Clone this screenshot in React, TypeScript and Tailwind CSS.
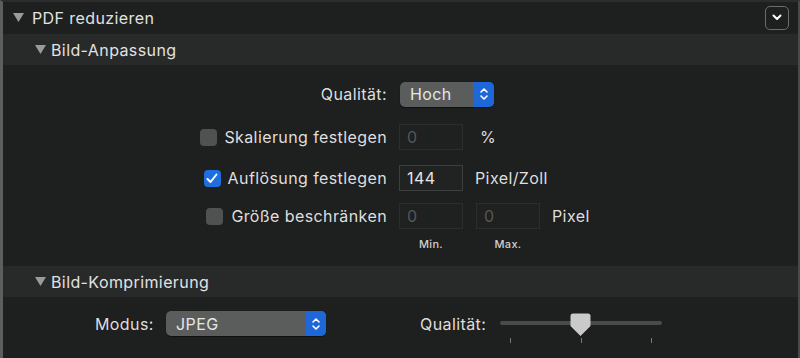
import React from "react";

const font = { fontFamily: "Inter, 'Noto Sans', sans-serif" };

function Tri({ className }: { className?: string }) {
  return (
    <svg width="11" height="9" viewBox="0 0 11 9" className={className}>
      <polygon points="0,0 11,0 5.5,9" fill="#9a9a9a" />
    </svg>
  );
}

function Stepper() {
  return (
    <svg width="10" height="16" viewBox="0 0 10 16">
      <path d="M2 6 L5 3 L8 6" stroke="white" strokeWidth="1.6" fill="none" strokeLinecap="round" strokeLinejoin="round" />
      <path d="M2 10 L5 13 L8 10" stroke="white" strokeWidth="1.6" fill="none" strokeLinecap="round" strokeLinejoin="round" />
    </svg>
  );
}

function Popup({ label, width }: { label: string; width: string }) {
  return (
    <div className={`flex h-[25px] ${width} rounded-[5px] bg-[#5b5c5c] overflow-hidden shadow-[0_0.5px_1px_rgba(0,0,0,0.5)]`}>
      <div className="flex-1 flex items-center pl-[10px] text-[16px] tracking-[0.4px] text-[#e6e6e6]">{label}</div>
      <div className="w-[21px] bg-[#1d67d8] flex items-center justify-center">
        <Stepper />
      </div>
    </div>
  );
}

function Check({ checked }: { checked?: boolean }) {
  if (checked)
    return (
      <div className="w-[17px] h-[17px] rounded-[4px] bg-[#1f6ee0] flex items-center justify-center">
        <svg width="12" height="11" viewBox="0 0 12 11">
          <path d="M1.5 6 L4.5 9 L10.5 1.5" stroke="white" strokeWidth="2" fill="none" strokeLinecap="round" strokeLinejoin="round" />
        </svg>
      </div>
    );
  return <div className="w-[17px] h-[17px] rounded-[4px] bg-[#505151]" />;
}

function Field({ value, active }: { value: string; active?: boolean }) {
  return (
    <div
      className={`w-[64px] h-[26px] flex items-center pl-[7px] text-[16px] tracking-[0.4px] border ${
        active ? "border-[#3d3e3e] bg-[#212222] text-[#e6e6e6]" : "border-[#2c2d2d] bg-[#1f2020] text-[#565757]"
      }`}
    >
      {value}
    </div>
  );
}

export default function App() {
  return (
    <div
      className="w-[800px] h-[358px] bg-[#1e1f1f] border-l-[3px] border-l-[#5d5d5d] border-r-[2px] border-r-[#4a4a4a] border-t-[2px] border-t-[#2c2c2c] flex flex-col text-[#dedede] overflow-hidden box-border text-[16px] tracking-[0.4px]"
      style={font}
    >
      {/* header */}
      <div className="h-[31px] flex items-center pl-[10px] pr-[9px] shrink-0">
        <Tri className="mr-[8px]" />
        <span className="text-[#e2e2e2]">PDF reduzieren</span>
        <div className="ml-auto w-[24px] h-[24px] rounded-[5px] border border-[#6c6c6c] flex items-center justify-center">
          <svg width="10" height="7" viewBox="0 0 10 7">
            <path d="M1.5 1.5 L5 5 L8.5 1.5" stroke="white" strokeWidth="2" fill="none" strokeLinecap="round" strokeLinejoin="round" />
          </svg>
        </div>
      </div>
      {/* subheader */}
      <div className="h-[31px] mt-[1px] bg-[#282929] flex items-center pl-[32px] shrink-0">
        <Tri className="mr-[5px]" />
        <span className="text-[#e2e2e2]">Bild-Anpassung</span>
      </div>
      {/* content */}
      <div className="flex flex-col shrink-0 h-[201px]">
        <div className="flex items-center mt-[16px] h-[26px]">
          <div className="w-[384px] flex justify-end">Qualität:</div>
          <div className="ml-[13px]">
            <Popup label="Hoch" width="w-[94px]" />
          </div>
        </div>
        <div className="flex items-center mt-[17px] h-[26px]">
          <div className="w-[384px] flex justify-end items-center gap-[7px]">
            <Check />
            <span>Skalierung festlegen</span>
          </div>
          <div className="ml-[12px]">
            <Field value="0" />
          </div>
          <span className="ml-[17px]">%</span>
        </div>
        <div className="flex items-center mt-[15px] h-[26px]">
          <div className="w-[384px] flex justify-end items-center gap-[7px]">
            <Check checked />
            <span>Auflösung festlegen</span>
          </div>
          <div className="ml-[12px]">
            <Field value="144" active />
          </div>
          <span className="ml-[12px]">Pixel/Zoll</span>
        </div>
        <div className="flex items-center mt-[12px] h-[26px]">
          <div className="w-[384px] flex justify-end items-center gap-[8px]">
            <Check />
            <span>Größe beschränken</span>
          </div>
          <div className="ml-[12px] flex gap-[13px]">
            <Field value="0" />
            <Field value="0" />
          </div>
          <span className="ml-[12px]">Pixel</span>
        </div>
        <div className="flex mt-[7px] text-[11px] font-medium tracking-[0.3px] text-[#d0d0d0]">
          <div className="w-[396px]" />
          <div className="w-[64px] text-center">Min.</div>
          <div className="w-[13px]" />
          <div className="w-[64px] text-center">Max.</div>
        </div>
      </div>
      {/* subheader 2 */}
      <div className="h-[31px] bg-[#282929] flex items-center pl-[32px] shrink-0">
        <Tri className="mr-[5px]" />
        <span className="text-[#e2e2e2]">Bild-Komprimierung</span>
      </div>
      {/* bottom row */}
      <div className="flex items-center mt-[14px] h-[25px]">
        <span className="ml-[92px] w-[71px]">Modus:</span>
        <Popup label="JPEG" width="w-[160px]" />
        <span className="ml-[94px] w-[80px]">Qualität:</span>
        <div className="relative w-[162px] h-[25px]">
          <div className="absolute left-0 right-0 top-[10px] h-[4px] rounded-full bg-[#4a4b4b]" />
          <svg className="absolute left-[70px] top-[2px]" width="21" height="24" viewBox="0 0 21 24">
            <path d="M3 0.5 H18 A2.5 2.5 0 0 1 20.5 3 V13 L10.5 23 L0.5 13 V3 A2.5 2.5 0 0 1 3 0.5 Z" fill="#cacaca" />
          </svg>
        </div>
      </div>
      <div className="relative h-[10px]">
        <div className="absolute left-[507px] top-[2px] w-[1px] h-[5px] bg-[#7a7a7a]" />
        <div className="absolute left-[578px] top-[2px] w-[1px] h-[5px] bg-[#7a7a7a]" />
        <div className="absolute left-[648px] top-[2px] w-[1px] h-[5px] bg-[#7a7a7a]" />
      </div>
    </div>
  );
}
